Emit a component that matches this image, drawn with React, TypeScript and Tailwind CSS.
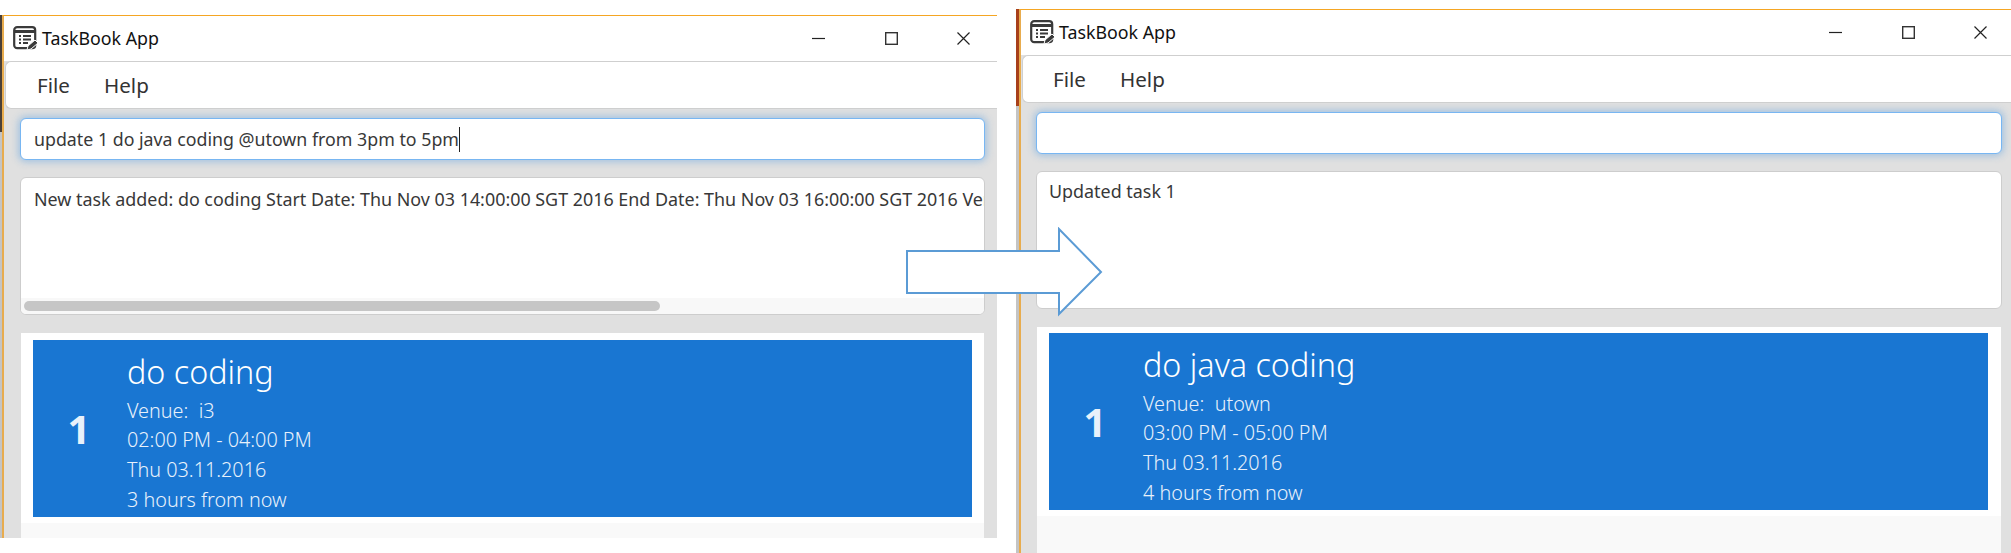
const FONT = "font-['Noto_Sans','Open_Sans',sans-serif]";

function AppIcon() {
  return (
    <svg width="26" height="26" viewBox="0 0 26 26" className="shrink-0">
      <rect x="1.2" y="1.2" width="21" height="21" rx="3" fill="#fff" stroke="#3a3a3a" strokeWidth="2.2" />
      <path d="M2 5.5h20" stroke="#3a3a3a" strokeWidth="3" />
      <path d="M6 10h2M6 13.5h2M6 17h2M10 10h8M10 13.5h8M10 17h5" stroke="#3a3a3a" strokeWidth="1.8" />
      <path d="M14 24l1-4 7-6 3 3-7 6z" fill="#3a3a3a" stroke="#fff" strokeWidth="1" />
    </svg>
  );
}

function WindowControls() {
  return (
    <div className="flex items-center gap-[59.5px]">
      <svg width="13" height="13" viewBox="0 0 13 13"><path d="M0 6.5h13" stroke="#222" strokeWidth="1.2" /></svg>
      <svg width="13" height="13" viewBox="0 0 13 13"><rect x="0.7" y="0.7" width="11.6" height="11.6" fill="none" stroke="#333" strokeWidth="1.4" /></svg>
      <svg width="13" height="13" viewBox="0 0 13 13"><path d="M0.5 0.5l12 12M12.5 0.5l-12 12" stroke="#222" strokeWidth="1.2" /></svg>
    </div>
  );
}

type TaskWindowProps = {
  command: string;
  message: string;
  title: string;
  venue: string;
  time: string;
  due: string;
  scrollbar?: boolean;
  stripe: string;
  menuPad: string;
  messagePad: string;
  inputMargin: string;
  listMargin: string;
  listPad: string;
  controlsPad: string;
  outerClass: string;
};

function TaskWindow(p: TaskWindowProps) {
  return (
    <div className={`flex ${p.outerClass}`}>
      <div className="flex flex-col bg-[#c4c4c4]">
        <div className={p.stripe} />
      </div>
      <div className="flex min-w-0 flex-1 flex-col border-t border-l-2 border-t-[#f5a623] border-l-[#e8ac4e] bg-[#e0e0e0]">
        <div className={`flex h-[45px] shrink-0 items-center justify-between bg-white pl-[9px] ${p.controlsPad}`}>
          <div className="flex items-center gap-[3px]">
            <AppIcon />
            <span className="text-[17.8px] text-[#111]">TaskBook App</span>
          </div>
          <WindowControls />
        </div>
        <div className={`ml-px flex h-[48px] shrink-0 items-center gap-[34px] rounded-tl-[6px] rounded-bl-[6px] border-y border-l border-[#cfcfcf] bg-white text-[20.6px] text-[#333] ${p.menuPad}`}>
          <span>File</span>
          <span>Help</span>
        </div>
        <div className={`mt-[9px] flex h-[42px] shrink-0 items-center rounded-[6px] border border-[#78b6f2] bg-white px-[13px] text-[17.8px] text-[#383838] shadow-[0_0_7px_2px_rgba(90,160,225,0.45)] ${p.inputMargin}`}>
          <span>{p.command}</span>
          {p.command && <span className="h-[25px] w-px bg-[#222]" />}
        </div>
        <div className={`mt-[17px] flex h-[138px] shrink-0 flex-col overflow-hidden rounded-[6px] border border-[#cdcdcd] bg-white ${p.inputMargin}`}>
          <div className={`min-h-0 flex-1 overflow-hidden whitespace-nowrap text-[17.9px] text-[#383838] ${p.messagePad}`}>{p.message}</div>
          {p.scrollbar && (
            <div className="h-[16px] shrink-0 bg-[#f8f8f8] px-[3px] pt-[3px]">
              <div className="h-[10px] w-[636px] rounded-full bg-[#c6c6c6]" />
            </div>
          )}
        </div>
        <div className={`mt-[18px] flex min-h-0 flex-1 flex-col bg-[#f9f9f9] ${p.listMargin}`}>
          <div className={`bg-white pb-[6px] pl-[12px] ${p.listPad}`}>
            <div className="flex h-[177px] items-center bg-[#1976d2] text-[#e8f1fb]">
              <div className="w-[94px] pr-[2px] text-center text-[40px] font-bold">1</div>
              <div className="flex flex-col pt-[3px] text-[19.8px] leading-[29.7px] font-light">
                <div className="text-[32.3px] leading-[50px] font-light text-white">{p.title}</div>
                <div>Venue:&nbsp; {p.venue}</div>
                <div>{p.time}</div>
                <div>Thu 03.11.2016</div>
                <div>{p.due}</div>
              </div>
            </div>
          </div>
        </div>
      </div>
    </div>
  );
}

export default function App() {
  return (
    <div className={`relative flex h-[553px] w-[2011px] overflow-hidden bg-white ${FONT}`}>
      <TaskWindow
        command="update 1 do java coding @utown from 3pm to 5pm"
        message="New task added: do coding Start Date: Thu Nov 03 14:00:00 SGT 2016 End Date: Thu Nov 03 16:00:00 SGT 2016 Venue: i3"
        title="do coding"
        venue="i3"
        time="02:00 PM - 04:00 PM"
        due="3 hours from now"
        scrollbar
        stripe="h-[117px] w-[2px] bg-[#4a4038]"
        menuPad="pl-[31px]"
        messagePad="px-[13px] pt-[8px]"
        inputMargin="ml-[16px] mr-[12px]"
        listMargin="ml-[17px] mr-[13px]"
        listPad="pt-[7px] pr-[12px]"
        controlsPad="pr-[27px]"
        outerClass="mt-[15px] mb-[15px] w-[997px]"
      />
      <TaskWindow
        command=""
        message="Updated task 1"
        title="do java coding"
        venue="utown"
        time="03:00 PM - 05:00 PM"
        due="4 hours from now"
        stripe="h-[97px] w-[3px] bg-[#a8401a]"
        menuPad="pl-[30px]"
        messagePad="px-[12px] pt-[6px]"
        inputMargin="ml-[15px] mr-[9px]"
        listMargin="ml-[16px] mr-[10px]"
        listPad="pt-[6px] pr-[13px]"
        controlsPad="pr-[24px]"
        outerClass="ml-[19px] mt-[9px] w-[995px]"
      />
      <svg width="200" height="90" viewBox="0 0 200 90" className="absolute top-[227px] left-[905px]">
        <path d="M2 24H154V2L196 45L154 87V66H2Z" fill="#fff" stroke="#5b9bd5" strokeWidth="2" />
      </svg>
    </div>
  );
}
